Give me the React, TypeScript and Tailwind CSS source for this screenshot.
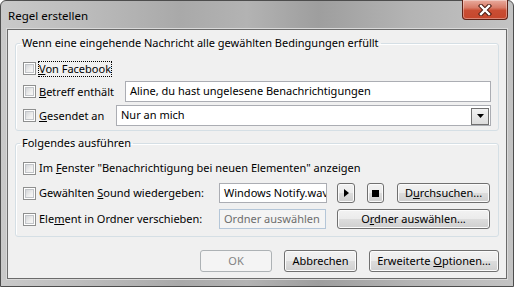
import React from "react";

function CheckBox() {
  return (
    <div className="h-[13px] w-[13px] shrink-0 border border-[#8e8f8f] bg-white p-[1px]">
      <div className="h-full w-full border border-[#c2c5c9] bg-[linear-gradient(135deg,#d4d6d9_0%,#eeeeee_60%,#f7f7f7_100%)]" />
    </div>
  );
}

function Btn({ children, className = "", disabled = false }: { children: React.ReactNode; className?: string; disabled?: boolean }) {
  return (
    <div
      className={
        "flex items-center justify-center rounded-[3px] border " +
        (disabled
          ? "border-[#adb2b5] bg-[#f4f4f4] text-[#838383] "
          : "border-[#707070] bg-[linear-gradient(to_bottom,#f2f2f2_0%,#ebebeb_50%,#dddddd_50%,#cfcfcf_100%)] shadow-[inset_0_0_0_1px_#fbfbfb] ") +
        className
      }
    >
      {children}
    </div>
  );
}

function Row({ children, className = "" }: { children: React.ReactNode; className?: string }) {
  return <div className={"flex items-center " + className}>{children}</div>;
}

function Label({ children, focus = false, className = "" }: { children: React.ReactNode; focus?: boolean; className?: string }) {
  return (
    <span
      className={
        "ml-[2px] whitespace-nowrap border px-[0px] leading-[14px] " +
        (focus ? "border-dotted border-black " : "border-transparent ") +
        className
      }
    >
      {children}
    </span>
  );
}

export default function App() {
  return (
    <div className="h-[287px] w-[514px] font-['Noto_Sans',sans-serif] text-[11px] text-black">
      <div className="flex h-full flex-col rounded-t-[6px] border border-[#4d4d4d] bg-[linear-gradient(to_right,#c9c9c9_0%,#bdbdbd_15%,#a9a9a9_35%,#b3b3b3_48%,#9e9e9e_62%,#b4b4b4_80%,#c3c3c3_100%)] px-[6px] pb-[7px]">
        {/* title bar */}
        <div className="flex h-[28px] items-start justify-between">
          <span className="pl-[1px] pt-[6px] text-[11.5px]">Regel erstellen</span>
          <div className="-mr-[1px] -mt-[1px] flex h-[20px] w-[46px] items-center justify-center rounded-b-[4px] border border-t-0 border-[#5e2217] bg-[linear-gradient(to_bottom,#e9ab9d_0%,#d87c68_40%,#c94d33_55%,#c6462c_100%)] shadow-[inset_0_0_0_1px_rgba(255,255,255,0.35)]">
            <svg width="14" height="12" viewBox="0 0 14 12">
              <path d="M3 2 L11 10 M11 2 L3 10" stroke="#4a1a10" strokeWidth="4.4" strokeLinecap="square" />
              <path d="M3 2 L11 10 M11 2 L3 10" stroke="#ffffff" strokeWidth="2.4" strokeLinecap="square" />
            </svg>
          </div>
        </div>

        {/* client */}
        <div className="flex flex-1 flex-col border border-[#6b6b6b] bg-[#f0f0f0] px-[7px] pt-[5px] shadow-[0_0_0_1px_#d9d9d9]">
          <fieldset className="rounded-[3px] border border-[#d5dfe5] pb-[4px] pl-[7px] pr-[7px] pt-[7px] shadow-[inset_1px_1px_0_#ffffff]">
            <legend className="-ml-[3px] px-[2px] leading-[16px]">Wenn eine eingehende Nachricht alle gewählten Bedingungen erfüllt</legend>
            <div className="flex flex-col">
              <Row className="h-[21px]">
                <CheckBox />
                <Label focus>
                  <u>V</u>on Facebook
                </Label>
              </Row>
              <Row className="mt-[2px] h-[21px]">
                <CheckBox />
                <Label>
                  <u>B</u>etreff enthält
                </Label>
                <div className="ml-auto flex h-[21px] w-[366px] items-center border border-[#abadb3] bg-white pl-[4px]">
                  Aline, du hast ungelesene Benachrichtigungen
                </div>
              </Row>
              <Row className="mt-[3px] h-[21px]">
                <CheckBox />
                <Label>
                  <u>G</u>esendet an
                </Label>
                <div className="ml-auto flex h-[21px] w-[375px] items-center justify-between border border-[#abadb3] bg-white pl-[4px]">
                  <span>Nur an mich</span>
                  <div className="mr-[1px] mt-[1px] flex h-[17px] w-[18px] items-center justify-center border border-[#707070] bg-[linear-gradient(to_bottom,#f2f2f2,#dcdcdc)]">
                    <svg width="7" height="4" viewBox="0 0 7 4">
                      <path d="M0 0 H7 L3.5 4 Z" fill="#000" />
                    </svg>
                  </div>
                </div>
              </Row>
            </div>
          </fieldset>

          <fieldset className="mt-[4px] rounded-[3px] border border-[#d5dfe5] pb-[7px] pl-[7px] pr-[8px] pt-[7px] shadow-[inset_1px_1px_0_#ffffff]">
            <legend className="-ml-[3px] px-[2px] leading-[16px]">Folgendes ausführen</legend>
            <div className="flex flex-col">
              <Row className="h-[20px]">
                <CheckBox />
                <Label>
                  Im <u>F</u>enster "Benachrichtigung bei neuen Elementen" anzeigen
                </Label>
              </Row>
              <Row className="mt-[5px] h-[20px]">
                <CheckBox />
                <Label className="w-[181px]">
                  Gewählten <u>S</u>ound wiedergeben:
                </Label>
                <div className="flex h-[20px] w-[108px] items-center overflow-hidden whitespace-nowrap border border-[#abadb3] bg-white pl-[4px]">
                  Windows Notify.wav
                </div>
                <Btn className="ml-[10px] h-[20px] w-[18px]">
                  <svg width="5" height="8" viewBox="0 0 5 8">
                    <path d="M0 0 L5 4 L0 8 Z" fill="#000" />
                  </svg>
                </Btn>
                <Btn className="ml-[12px] h-[20px] w-[17px]">
                  <div className="h-[7px] w-[7px] bg-black" />
                </Btn>
                <Btn className="ml-[13px] h-[20px] w-[93px]">
                  <span>
                    D<u>u</u>rchsuchen...
                  </span>
                </Btn>
              </Row>
              <Row className="mt-[6px] h-[20px]">
                <CheckBox />
                <Label className="w-[181px]">
                  Ele<u>m</u>ent in Ordner verschieben:
                </Label>
                <div className="flex h-[20px] w-[107px] items-center whitespace-nowrap border border-[#b4c6d8] bg-[#f4f4f4] pl-[4px] text-[#6d6d6d]">
                  Ordner auswählen
                </div>
                <Btn className="ml-[11px] h-[20px] w-[153px]">
                  <span>
                    O<u>r</u>dner auswählen...
                  </span>
                </Btn>
              </Row>
            </div>
          </fieldset>

          <div className="mt-[13px] flex justify-end gap-[12px] pr-[0px]">
            <Btn disabled className="h-[22px] w-[72px]">
              OK
            </Btn>
            <Btn className="h-[22px] w-[73px]">Abbrechen</Btn>
            <Btn className="h-[22px] w-[130px]">
              <span>
                Erweiterte <u>O</u>ptionen...
              </span>
            </Btn>
          </div>
        </div>
      </div>
    </div>
  );
}
